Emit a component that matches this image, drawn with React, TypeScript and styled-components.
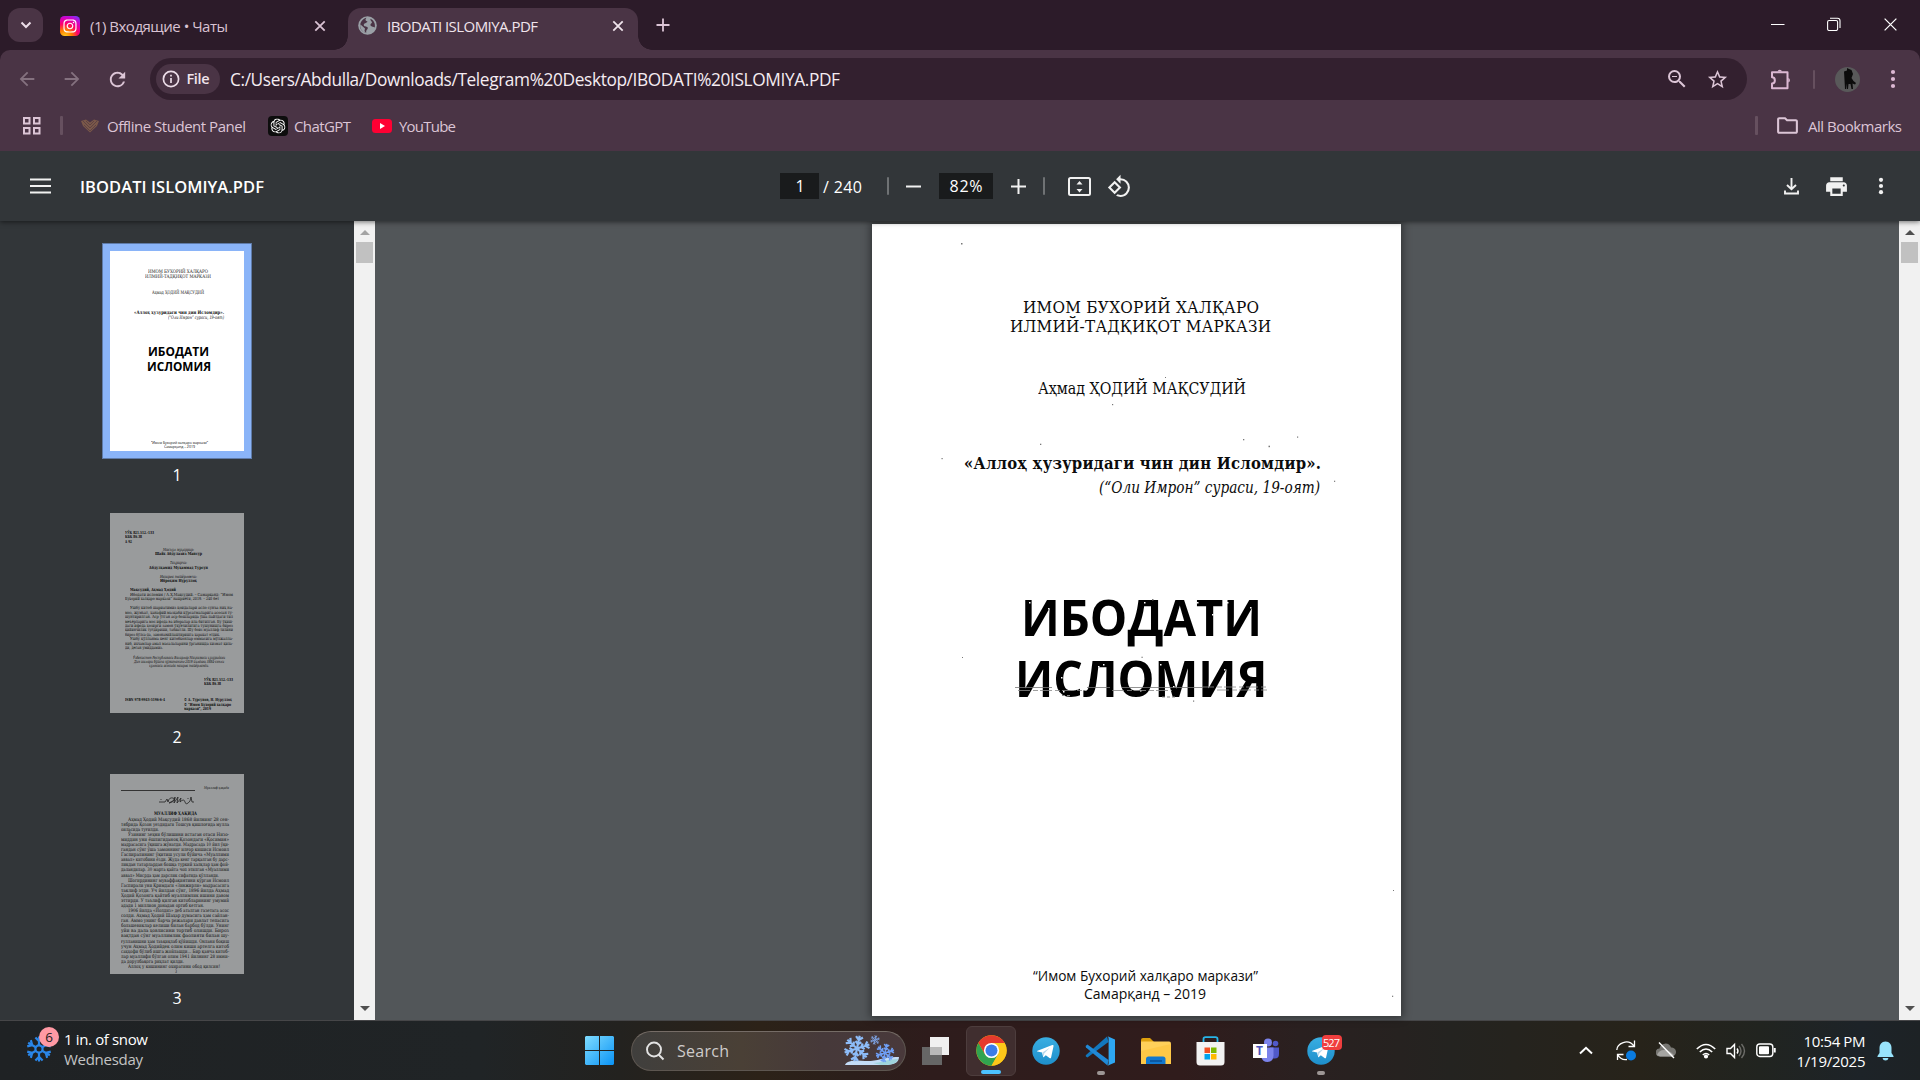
import React, { useLayoutEffect, useRef, useState } from "react";
import styled, { createGlobalStyle, css } from "styled-components";
import { FaInstagram } from "react-icons/fa";
import { SiOpenai } from "react-icons/si";
import {
  MdArrowBack,
  MdArrowForward,
  MdRefresh,
  MdZoomOut,
  MdStarBorder,
  MdPrint,
  MdRotate90DegreesCcw,
  MdOutlineFolder,
} from "react-icons/md";

const UI = '"Open Sans", "Noto Sans", "Liberation Sans", sans-serif';
const SERIF = '"DejaVu Serif Condensed", "DejaVu Serif", "Liberation Serif", serif';

const Global = createGlobalStyle`
  * { box-sizing: border-box; }
  body { margin: 0; background: #202124; overflow: hidden; }
  svg { display: block; flex: none; }
`;

/* ---------- text tracked or condensed to a measure ---------- */

const Measure = styled.span<{
  $w: number; $size: number; $color: string; $weight: number; $font: string;
  $italic?: boolean; $lh?: number; $ml?: number; $mt?: number;
}>`
  display: block;
  flex: none;
  white-space: pre;
  width: ${(p) => p.$w}px;
  height: ${(p) => p.$lh ?? 20}px;
  margin-left: ${(p) => p.$ml ?? 0}px;
  margin-top: ${(p) => p.$mt ?? 0}px;
  font: ${(p) => (p.$italic ? "italic" : "normal")} ${(p) => p.$weight} ${(p) => p.$size}px/${(p) => p.$lh ?? 20}px ${(p) => p.$font};
  color: ${(p) => p.$color};
`;

const Run = styled.span`
  display: inline-block;
  transform-origin: 0 50%;
`;

type TextProps = {
  w: number; size?: number; color?: string; weight?: number; font?: string;
  italic?: boolean; lh?: number; ml?: number; mt?: number; condense?: boolean; children: string;
};

function Text({ w, size = 15, color = "#fff", weight = 400, font = UI, italic, lh, ml, mt, condense, children }: TextProps) {
  const ref = useRef<HTMLSpanElement>(null);
  const [natural, setNatural] = useState(0);
  useLayoutEffect(() => {
    if (ref.current && !natural) setNatural(ref.current.getBoundingClientRect().width);
  }, [natural]);
  const fit = !natural ? undefined
    : condense ? { transform: `scaleX(${w / natural})` }
    : { letterSpacing: `${(w - natural) / Math.max(1, children.length - 1)}px` };
  return (
    <Measure $w={w} $size={size} $color={color} $weight={weight} $font={font} $italic={italic} $lh={lh} $ml={ml} $mt={mt}>
      <Run ref={ref} style={fit}>{children}</Run>
    </Measure>
  );
}

/* ---------- window shell ---------- */

const Screen = styled.div`
  width: 1920px;
  height: 1080px;
  display: flex;
  flex-direction: column;
  overflow: hidden;
  font-family: ${UI};
  background: #2c1b29;
`;

const TabStrip = styled.div`
  height: 50px;
  flex: none;
  display: flex;
  align-items: flex-start;
  padding-left: 8px;
  background: #2c1b29;
`;

const TabSearch = styled.div`
  width: 35px;
  height: 34px;
  margin-top: 8px;
  border-radius: 12px;
  background: #4a3445;
  display: grid;
  place-items: center;
`;

const Tab = styled.div<{ $active?: boolean }>`
  position: relative;
  height: 42.5px;
  margin-top: 7.5px;
  display: flex;
  align-items: center;
  width: ${(p) => (p.$active ? 290 : 305)}px;
  padding: ${(p) => (p.$active ? "0 14px 6px 10px" : "0 22px 6px 17px")};
  border-radius: 13px 13px 0 0;
  background: ${(p) => (p.$active ? "#4a3445" : "transparent")};
  ${(p) => p.$active && css`
    &::before, &::after {
      content: "";
      position: absolute;
      bottom: 0;
      width: 14px;
      height: 14px;
    }
    &::before { left: -14px; background: radial-gradient(circle at 0 0, transparent 13.5px, #4a3445 14px); }
    &::after { right: -14px; background: radial-gradient(circle at 100% 0, transparent 13.5px, #4a3445 14px); }
  `}
`;

const TabClose = styled.div`
  margin-left: auto;
`;

const NewTab = styled.div`
  margin: 18px 0 0 18px;
`;

const WindowControls = styled.div`
  margin: 17px 22px 0 auto;
  display: flex;
  gap: 42px;
`;

const Chrome = styled.div`
  height: 101px;
  flex: none;
  display: flex;
  flex-direction: column;
  background: #4a3445;
  border-radius: 10px 10px 0 0;
`;

const AddressRow = styled.div`
  height: 58px;
  flex: none;
  display: flex;
  align-items: center;
  padding-left: 16px;
`;

const NavButton = styled.div<{ $dim?: boolean }>`
  width: 45px;
  color: ${(p) => (p.$dim ? "#84717f" : "#dcc5d6")};
`;

const Omnibox = styled.div`
  width: 1597px;
  height: 42px;
  margin-left: -1px;
  border-radius: 21px;
  background: #33202f;
  display: flex;
  align-items: center;
  padding: 0 18px 0 6px;
  color: #dcc5d6;
`;

const FileChip = styled.div`
  width: 64px;
  height: 30px;
  border-radius: 15px;
  background: #4a3445;
  display: flex;
  align-items: center;
  padding-left: 6px;
`;

const OmniActions = styled.div`
  margin-left: auto;
  display: flex;
  align-items: center;
  gap: 17px;
`;

const Extras = styled.div`
  display: flex;
  align-items: center;
  flex: 1;
  color: #dcb8d3;
  padding-left: 23px;
`;

const Divider = styled.div<{ $w?: number; $h?: number; $c?: string; $m?: string }>`
  width: ${(p) => p.$w ?? 2}px;
  height: ${(p) => p.$h ?? 19}px;
  margin: ${(p) => p.$m ?? "0"};
  border-radius: 1px;
  flex: none;
  background: ${(p) => p.$c ?? "#66505f"};
`;

const BookmarkRow = styled.div`
  height: 35px;
  display: flex;
  align-items: center;
  padding: 0 18px 0 22px;
`;

const BookmarkIcon = styled.div<{ $w: number; $ml: number }>`
  width: ${(p) => p.$w}px;
  margin-left: ${(p) => p.$ml}px;
  flex: none;
`;

const AllBookmarks = styled.div`
  margin-left: auto;
  display: flex;
  align-items: center;
  color: #dcc5d6;
`;

/* ---------- PDF viewer ---------- */

const PdfToolbar = styled.div`
  position: relative;
  z-index: 2;
  height: 70px;
  flex: none;
  display: grid;
  grid-template-columns: 780px 1fr auto;
  align-items: center;
  background: #323639;
  box-shadow: 0 1px 5px rgba(0, 0, 0, 0.55);
  clip-path: inset(0 0 -10px 0);
`;

const ToolbarGroup = styled.div<{ $pad?: string }>`
  display: flex;
  align-items: center;
  padding: ${(p) => p.$pad ?? "0"};
`;

const Field = styled.div<{ $w: number; $ml?: number }>`
  width: ${(p) => p.$w}px;
  height: 26px;
  margin-left: ${(p) => p.$ml ?? 0}px;
  background: #191b1c;
  display: flex;
  align-items: center;
  justify-content: center;
`;

const ToolIcon = styled.div<{ $ml: number }>`
  margin-left: ${(p) => p.$ml}px;
  color: #f1f1f1;
`;

const Viewer = styled.div`
  height: 799px;
  flex: none;
  display: flex;
  background: #525659;
`;

const Sidebar = styled.div`
  width: 354px;
  background: #323639;
  padding-top: 30px;
  display: flex;
  flex-direction: column;
  align-items: center;
  overflow: hidden;
`;

const Thumb = styled.div`
  height: 261.5px;
  flex: none;
  display: flex;
  flex-direction: column;
  align-items: center;
`;

const ThumbPaper = styled.div<{ $dim?: boolean; $selected?: boolean }>`
  width: 134px;
  height: 200px;
  overflow: hidden;
  flex: none;
  display: flex;
  flex-direction: column;
  background: ${(p) => (p.$dim ? "#999b9c" : "#fff")};
  box-shadow: ${(p) => (p.$selected ? "0 0 0 7px #8ab4f8, 0 0 0 8px #5f7ba8" : "none")};
`;

const ThumbNumber = styled.div`
  font: 400 16px/24px ${UI};
  color: #fff;
  margin-top: 12px;
`;

const ScrollTrack = styled.div`
  width: 21px;
  height: 799px;
  flex: none;
  background: #f1f1f1;
  display: flex;
  flex-direction: column;
  align-items: center;
`;

const Arrow = styled.div<{ $up?: boolean; $c: string }>`
  width: 0;
  height: 0;
  border-left: 5px solid transparent;
  border-right: 5px solid transparent;
  ${(p) => p.$up
    ? css`border-bottom: 5px solid ${p.$c}; margin-top: 9px;`
    : css`border-top: 5px solid ${p.$c}; margin: auto 0 9px;`}
`;

const ScrollThumb = styled.div`
  width: 17px;
  height: 21px;
  margin-top: 7px;
  background: #c1c1c1;
`;

const PageArea = styled.div`
  flex: 1;
  padding: 3px 0 0 497px;
`;

const Paper = styled.div`
  position: relative;
  width: 529px;
  height: 792px;
  background: #fff;
  box-shadow: 0 0 8px 2px rgba(0, 0, 0, 0.4);
  display: flex;
  flex-direction: column;
`;

const Specks = styled.svg`
  position: absolute;
  inset: 0;
`;

/* ---------- taskbar ---------- */

const Taskbar = styled.div`
  height: 60px;
  flex: none;
  display: grid;
  grid-template-columns: 585px 1fr auto;
  border-top: 1px solid #464648;
  background: linear-gradient(90deg, #1f2224 0, #202426 480px, #23221f 620px, #2c2218 760px, #2b1f1b 850px, #2e1c1c 930px, #301c1c 1180px, #2a2020 1300px, #242320 1450px, #27231a 1640px, #212420 1760px, #1d2328 1860px, #1d2225 100%);
`;

const Weather = styled.div`
  display: flex;
  padding: 3px 0 0 26px;
`;

const WeatherIcon = styled.div`
  position: relative;
  width: 38px;
  padding-top: 12px;
`;

const CountBadge = styled.div`
  position: absolute;
  left: 13px;
  top: 3px;
  width: 20px;
  height: 20px;
  border-radius: 50%;
  background: #ff99a4;
  color: #1b1b1b;
  font: 400 13.5px/20px ${UI};
  text-align: center;
`;

const TextStack = styled.div<{ $left?: boolean }>`
  display: flex;
  flex-direction: column;
  align-items: ${(p) => (p.$left ? "flex-start" : "flex-end")};
  padding-top: ${(p) => (p.$left ? 5 : 0)}px;
`;

const Apps = styled.div`
  display: flex;
  align-items: center;
`;

const SearchBox = styled.div`
  width: 275px;
  height: 40px;
  margin: 0 0 0 17px;
  border-radius: 20px;
  border: 1px solid #5d5650;
  border-top-color: #756c66;
  background: linear-gradient(90deg, #403f3d, #4a4036 40%, #46393a 70%, #49393b);
  display: flex;
  align-items: center;
  padding: 0 5px 0 13px;
`;

const AppTile = styled.div<{ $active?: boolean; $ml?: number }>`
  position: relative;
  width: 50px;
  height: 50px;
  margin-left: ${(p) => p.$ml ?? 5}px;
  border-radius: 6px;
  display: grid;
  place-items: center;
  ${(p) => p.$active && css`background: #402e2f; border: 1px solid #4d3d3d;`}
`;

const Running = styled.i<{ $w: number; $c: string }>`
  position: absolute;
  bottom: 1px;
  left: calc(50% - ${(p) => p.$w / 2}px);
  width: ${(p) => p.$w}px;
  height: 4px;
  border-radius: 2px;
  background: ${(p) => p.$c};
`;

const Unread = styled.div`
  position: absolute;
  left: 26px;
  top: 9px;
  width: 20px;
  height: 15px;
  border-radius: 4px;
  background: #f03e3e;
  display: flex;
  justify-content: center;
`;

const Tray = styled.div`
  display: flex;
  align-items: center;
  padding-right: 26px;
`;

const TrayIcon = styled.div<{ $ml?: number }>`
  margin-left: ${(p) => p.$ml ?? 0}px;
`;

/* ---------- icons ---------- */

const CloseX = ({ c, s = 12, w = 1.8 }: { c: string; s?: number; w?: number }) => (
  <svg width={s} height={s} viewBox="0 0 12 12" stroke={c} strokeWidth={w} fill="none"><path d="M1.3 1.3l9.4 9.4M10.7 1.3L1.3 10.7" /></svg>
);

const Dots = ({ c, pitch }: { c: string; pitch: number }) => (
  <svg width="6" height="24" fill={c}>
    <circle cx="3" cy={12 - pitch} r="2.1" /><circle cx="3" cy="12" r="2.1" /><circle cx="3" cy={12 + pitch} r="2.1" />
  </svg>
);

const Globe = () => (
  <svg width="19" height="19" viewBox="0 0 19 19">
    <circle cx="9.5" cy="9.500" r="9.300" fill="#9aa0a6" />
    <path d="M8.500 1.800C6.500 3.800 8 5.200 9.500 5.500C8.500 7.500 5.500 7 5.800 9.200C6 11 9.800 9.800 9.800 12C9.800 13.500 7.800 13.800 8.300 16.800C4.500 16.200 2.300 13.500 2 10C2.500 5.500 5 2.500 8.500 1.800Z" fill="#4a3445" />
    <path d="M2.200 8.300L7 12.500L6.500 15L7.800 16.900A7.500 7.500 0 0 1 2.200 8.300Z" fill="#9aa0a6" />
    <path d="M12.500 2.800C16 4.500 17.500 8 16.800 11.500C15.800 10.500 13.500 11 12.500 9.500C12 8 13.500 7.500 14 6.500C13.800 5 12 5 12.500 2.800Z" fill="#4a3445" />
  </svg>
);

const Puzzle = () => (
  <svg width="22" height="21" fill="none" stroke="currentColor" strokeWidth="2" strokeLinejoin="round">
    <path d="M2 3.200H17.500V19.200H2V14.500C5.800 14.500 5.800 8.300 2 8.300Z" />
    <path d="M7.500 2.500A2.300 2.300 0 0 1 12 2.500ZM18.300 9A2.300 2.300 0 0 1 18.300 13.400Z" fill="currentColor" stroke="none" />
  </svg>
);

const Flake = ({ size, color, w = 2.2 }: { size: number; color: string; w?: number }) => (
  <svg width={size} height={size} viewBox="-13 -13 26 26" stroke={color} strokeWidth={w} fill="none">
    <circle r="3.6" />
    {[0, 60, 120, 180, 240, 300].map((a) => (
      <path key={a} transform={`rotate(${a})`} d="M0-3.6V-12.5M-3.6-11.5L0-7.8L3.6-11.5" />
    ))}
  </svg>
);

const SnowArt = () => (
  <svg width="57" height="31" viewBox="0 0 57 31" fill="none">
    <path d="M2 30C4 25 14 25 22 26C33 27 42 21 56 22C56 28 50 30 42 30Z" fill="#c4dcf7" />
    <path d="M30 28C38 28 44 24 55 24C54 29 48 30 38 30Z" fill="#9fd4dd" />
    {[[14, 13.5, 1, "#8dbcf8"], [42, 18, 0.72, "#6f9ff5"], [32, 5, 0.36, "#7fa6e8"]].map(([x, y, s, c], i) => (
      <g key={i} transform={`translate(${x} ${y}) scale(${s}) rotate(12)`} stroke={c as string} strokeWidth="2.2">
        {[0, 60, 120, 180, 240, 300].map((a) => (
          <path key={a} transform={`rotate(${a})`} d="M0 0V-13M-3.5-12L0-8.6L3.5-12M-3-7L0-4.5L3-7" />
        ))}
      </g>
    ))}
  </svg>
);

const Telegram = () => (
  <svg width="28" height="28" viewBox="0 0 28 28">
    <defs><linearGradient id="tg" x2="0" y2="1"><stop stopColor="#39aee2" /><stop offset="1" stopColor="#1e8fcb" /></linearGradient></defs>
    <circle cx="14" cy="14" r="13.7" fill="url(#tg)" />
    <path d="M5.5 13.7L20.3 8c.8-.3 1.4.2 1.2 1.2l-2.4 11.2c-.2.9-.9 1.1-1.6.7l-3.7-2.8-1.9 1.8c-.3.3-.6.3-.7-.2l-1.2-4.3-4.4-1c-.8-.2-.8-.7-.1-.9z" fill="#fff" />
    <path d="M10.4 15.4l7.6-4.9-5.8 6-.5 3.3z" fill="#b9d9ec" />
  </svg>
);

const ChromeLogo = () => (
  <svg width="31" height="31" viewBox="-24 -24 48 48">
    <circle r="23.5" fill="#fbbc05" />
    <path d="M-20.35-11.75A23.5 23.5 0 0 1 20.35-11.75H0L-10.2 5.9Z" fill="#e53a2d" />
    <path d="M-20.35-11.75A23.5 23.5 0 0 0 0 23.5L10.2 5.9L0 11L-10.2 5.9Z" fill="#31a350" />
    <path d="M20.35-11.75A23.5 23.5 0 0 1 0 23.5L10.2 5.9L0-11.75Z" fill="#fdc81a" />
    <circle r="11.8" fill="#fff" /><circle r="9.3" fill="#3b7de8" />
  </svg>
);

const VsCode = () => (
  <svg width="31" height="30" viewBox="0 0 31 30">
    <path d="M22 .5L1 19Q.2 20 1.2 20.8L2.4 21.6L23.5 6Z" fill="#1277bd" />
    <path d="M22.5 29.5L1 11.5Q.2 10.5 1.2 9.5L2.4 8.6L23.5 24Z" fill="#2089d6" />
    <path d="M22.5.3L30 3.5V26.5L22.5 29.7Q23.6 29 23.6 27.5V2.5Q23.6 1 22.5.3Z" fill="#2ea7f2" />
  </svg>
);

const Explorer = () => (
  <svg width="30" height="28" viewBox="0 0 30 28">
    <path d="M0 3Q0 1 2 1H9L13 5H0Z" fill="#dfa00d" />
    <path d="M0 4.5H28Q30 4.5 30 6.5V27H0Z" fill="#ffd05a" />
    <path d="M0 14L30 7V27H0Z" fill="#fdc53e" opacity=".7" />
    <path d="M5 27V22Q5 19.5 7.500 19.500H22Q24.500 19.500 24.500 22V27Z" fill="#1278cf" />
    <path d="M9 24H21" stroke="#0a4f96" strokeWidth="1.500" />
  </svg>
);

const Store = () => (
  <svg width="29" height="30" viewBox="0 0 29 30">
    <path d="M7.500 7V3Q7.500 1.200 9.500 1.200H19.500Q21.500 1.200 21.500 3V7" stroke="#27b5e9" strokeWidth="1.800" fill="none" />
    <path d="M.5 6H28.5V26Q28.500 29.500 25 29.500H4Q.5 29.500 .5 26Z" fill="#f2f2f2" />
    <path d="M8.500 11.500H14V17H8.500Z" fill="#f25022" /><path d="M15 11.500H20.500V17H15Z" fill="#7fba00" />
    <path d="M8.500 18H14V23.500H8.500Z" fill="#00a4ef" /><path d="M15 18H20.500V23.500H15Z" fill="#ffb900" />
  </svg>
);

const TeamsMark = styled.div`
  position: relative;
  width: 28px;
  height: 25px;
  & > span {
    position: absolute;
    left: 1px;
    top: 6px;
    width: 14px;
    height: 14px;
    background: #fff;
    color: #4b53bc;
    font: 700 12px/14px ${UI};
    text-align: center;
  }
`;

const Teams = () => (
  <TeamsMark>
    <svg width="28" height="25" viewBox="0 0 28 25">
      <circle cx="23.500" cy="5.500" r="2.800" fill="#5059c9" /><circle cx="16" cy="4.500" r="4" fill="#7b83eb" />
      <path d="M18 9.500H27V16Q27 20.500 22.500 20.500H18Z" fill="#5059c9" />
      <path d="M9 9.500H21.500V17.500Q21 24 15.500 24Q10.500 24 9 18.500Z" fill="#7b83eb" />
    </svg>
    <span>T</span>
  </TeamsMark>
);

/* ---------- document content ---------- */

type Line = [y: number, x: number, w: number, text: string, style?: "b" | "i"];

const Leaf = styled.div`
  display: flex;
  flex-direction: column;
`;

function Lines({ lines, size, start = 0 }: { lines: Line[]; size: number; start?: number }) {
  return (
    <Leaf>
      {lines.map(([y, x, w, text, style], i) => (
        <Text key={i} w={w} ml={x} lh={4} mt={y - 2 - (i ? lines[i - 1][0] + 2 : start)}
          size={size} color="#0c0c0c" font={SERIF} condense
          weight={style === "b" ? 700 : 400} italic={style === "i"}>{text}</Text>
      ))}
    </Leaf>
  );
}

const ImprintFoot = styled.div`
  display: grid;
  grid-template-columns: 59px auto;
  padding-left: 15px;
  margin-top: 12.5px;
`;

const Imprint: Line[] = [
  [20, 15, 29, "УЎК 821.512.-133", "b"], [24.7, 15, 17, "КБК 86.38", "b"], [29.3, 15, 7, "А 92", "b"],
  [37.5, 53, 31, "Масъул муҳаррир:", "i"], [42, 45, 47, "Шайх Абдулазиз Мансур", "b"],
  [50.7, 60, 17, "Таҳрирчи:", "i"], [55.3, 39, 59, "Абдулҳамид Муҳаммад Турсун", "b"],
  [64.5, 50, 37, "Нашрга тайёрловчи:", "i"], [69, 50, 37, "Иброҳим Нуруллоҳ", "b"],
  [77.7, 20, 46, "Мақсудий, Аҳмад Ҳодий", "b"],
  [82.3, 20, 103, "Ибодати исломия / А.Ҳ.Мақсудий. – Самарқанд: “Имом"],
  [86.7, 15, 94, "Бухорий халқаро маркази” нашриёти, 2019. – 240 бет"],
  [95.7, 20, 103, "Ушбу китоб шариатимиз қоидалари асло сунъа ниҳ на-"],
  [100.2, 15, 108, "моз, жумъат, ҳанафий мазҳаби кўрсатмаларига асосан ту-"],
  [104.7, 15, 108, "шунтирилган. Аср ўтган аср бошларида ўша пайтдаги тил"],
  [109.1, 15, 108, "меъёрларига мос ифода ва иборалар ила битилган. Бу ўқиш-"],
  [113.600, 15, 108, "даги ифода ҳозирги замон ўқувчилигига тушунишга бироз"],
  [118, 15, 108, "қийинчилик туғдириши, табиатли. Шу боис муаллиф тилини"],
  [122.500, 15, 95, "бироз бўлса-да, замонавийлаштиришга ҳаракат этдик."],
  [127, 20, 103, "Ушбу қўлланма кенг китобхонлар оммасига мўлжалла-"],
  [131.500, 15, 108, "ниб, ихчамлар амал масалаларини ўрганишда хизмат қила-"],
  [136, 15, 38, "ди, деган умиддамиз."],
  [145.700, 23, 92, "Ўзбекистон Республикаси Вазирлар Маҳкамаси ҳузуридаги", "i"],
  [149.900, 24, 90, "Дин ишлари бўйича қўмитанинг 2019 йилдаги 3884-сонли", "i"],
  [154, 39, 60, "хулосаси асосида нашрга тайёрланди.", "i"],
  [167.300, 94, 29, "УЎК 821.512.-133", "b"], [171.500, 94, 17, "КБК 86.38", "b"],
];

const Rights: Line[] = [
  [2, 0, 48, "© А. Турсунов, Н. Нуруллоҳ", "b"],
  [6.300, 0, 47, "© “Имом Бухорий халқаро", "b"],
  [10.600, 0, 27, "маркази”, 2019", "b"],
];

const bio = [
  " Аҳмад Ҳодий Мақсудий 1868 йилнинг 28 сен-", "тябрида Қозон уездидаги Тошсув қишлоғида мулла", "оиласида туғилди.|38",
  " Ўзининг зеҳни бўлишини истаган отаси Низо-", "миддин уни ёшлигиданоқ Қозондаги «Қосимия»", "мадрасасига ўқишга жўнатди. Мадрасада 10 йил ўқи-",
  "гандан сўнг ўша замоннинг илғор кишиси Исмоил", "Гаспиралининг ўқитиш усули бўйича «Муаллими", "аввал» китобини ёзди. Жуда кенг тарқалган бу дарс-",
  "ликдан татарлардан бошқа туркий халқлар ҳам фой-", "даландилар. 30 марта қайта чоп этилган «Муаллими", "аввал» Мисрда ҳам дарслик сифатида қўлланди.|98",
  " Шогирдининг муваффақиятини кўрган Исмоил", "Гаспирали уни Қримдаги «Зинжирли» мадрасасига", "таклиф этди. Уч йилдан сўнг, 1896 йилда Аҳмад", "Ҳодий Қозонга қайтиб муаллимлик ишини давом",
  "эттирди. У таълиф қилган китобларининг умумий", "адади 1 миллион донадан ортиб кетган.|83",
  " 1906 йилда «Йолдиз» деб аталган газетага асос", "солди. Аҳмад Ҳодий Шаҳар думасига ҳам сайлан-", "ган. Аммо унинг барча режалари давлат тепасига", "большевиклар келиши билан барбод бўлди. Унинг",
  "уйи ва дала ҳовлисини тортиб олишди. Бироз", "вақтдан сўнг муаллимлик фаолияти билан шу-", "ғулланишни ҳам таъқиқлаб қўйишди. Онлани боқиш", "учун Аҳмад Ҳодийдек олим киши артелга китоб",
  "саҳҳофи бўлиб ишга жойлашди... Бир қанча китоб-", "лар муаллифи бўлган олим 1941 йилнинг 28 июни-", "да дорулбақога риҳлат қилди.|63", " Аллоҳ у кишининг охиратини обод қилсин!|92",
];

const Bio: Line[] = [
  [39, 44, 43, "МУАЛЛИФ ҲАҚИДА", "b"],
  ...bio.map((s, i): Line => {
    const [t, w] = s.split("|");
    const indent = t.startsWith(" ") ? 7 : 0;
    return [45.7 + i * 5.09, 11 + indent, w ? +w : 108 - indent, t.trim()];
  }),
  [198.300, 65, 2, "3"],
];

const BioHead = styled.div`
  height: 36px;
  flex: none;
  display: grid;
  grid-template-columns: 85px auto;
  padding: 11px 0 0 11px;
  & > hr { width: 74px; height: 1px; border: 0; margin: 5px 0 0; background: #333; }
  & > svg { grid-column: 1 / 3; margin-left: 38px; }
`;

const Cover: Line[] = [
  [21.300, 38, 60, "ИМОМ БУХОРИЙ ХАЛҚАРО"], [26.300, 35, 66, "ИЛМИЙ-ТАДҚИҚОТ МАРКАЗИ"],
  [42, 42, 52, "Аҳмад ҲОДИЙ МАҚСУДИЙ"],
  [61.300, 24, 90, "«Аллоҳ ҳузуридаги чин дин Исломдир».", "b"],
  [67.300, 58, 56, "(“Оли Имрон” сураси, 19-оят)", "i"],
];

const SPECKS: [number, number, number][] = [
  [89, 19, 1.5], [293, 153, 1], [240, 180, 1.2], [168, 219.700, 1.300], [371, 215, 1.300], [425, 212.500, 1.200],
  [396.500, 221.700, 1.500], [69.500, 234, 1.200], [462, 256.700, 1.200], [90, 433, 1], [269.500, 432.700, 1.200],
  [520, 771.700, 1.200], [521, 666, 1], [280, 375, 1.500], [321, 476.500, 1.200],
];

const WHITE: [number, number][] = [
  [157, 378], [176, 384], [272, 378], [325, 378], [340, 390], [355, 378], [378, 383],
  [189, 453], [205, 464], [231, 440], [230, 455], [288, 440], [301, 462], [324, 464], [352, 445], [361, 460], [379, 462], [382, 466],
  [191, 467], [226, 442], [303, 459], [296, 465], [268, 466],
];

function Scrollbar({ dim }: { dim?: boolean }) {
  return (
    <ScrollTrack>
      <Arrow $up $c={dim ? "#a3a3a3" : "#505050"} />
      <ScrollThumb />
      <Arrow $c="#505050" />
    </ScrollTrack>
  );
}

export default function App() {
  return (
    <>
      <Global />
      <Screen>
        <TabStrip>
          <TabSearch>
            <svg width="12" height="8" fill="none" stroke="#ecdde8" strokeWidth="2"><path d="M1.500 1.500L6 6L10.500 1.500" /></svg>
          </TabSearch>
          <Tab>
            <svg width="20" height="20" viewBox="0 0 20 20">
              <defs>
                <radialGradient id="ig" cx=".25" cy="1.050" r="1.200"><stop stopColor="#ffd521" /><stop offset=".3" stopColor="#ff7a00" /><stop offset=".55" stopColor="#ff0069" /><stop offset=".8" stopColor="#d300c5" /><stop offset="1" stopColor="#7638fa" /></radialGradient>
              </defs>
              <rect width="20" height="20" rx="4.500" fill="url(#ig)" />
              <FaInstagram x={2.500} y={2.500} size={15} color="#fff" />
            </svg>
            <Text w={138} ml={10} color="#d9c2d3">(1) Входящие • Чаты</Text>
            <TabClose><CloseX c="#d9c2d3" /></TabClose>
          </Tab>
          <Tab $active>
            <Globe />
            <Text w={151} ml={10} color="#f0e4ec">IBODATI ISLOMIYA.PDF</Text>
            <TabClose><CloseX c="#f0e4ec" /></TabClose>
          </Tab>
          <NewTab>
            <svg width="14" height="14" stroke="#dcc5d6" strokeWidth="1.800"><path d="M7 .5V13.500M.5 7H13.500" /></svg>
          </NewTab>
          <WindowControls>
            <svg width="14" height="14" stroke="#fff"><path d="M0 7.500H13.500" /></svg>
            <svg width="14" height="14" fill="none" stroke="#fff" strokeWidth="1.100"><rect x=".6" y="3.500" width="10" height="10" rx="1.500" /><path d="M3 1.200H10.500Q13 1.200 13 3.700V11" /></svg>
            <CloseX c="#fff" s={15} w={1} />
          </WindowControls>
        </TabStrip>

        <Chrome>
          <AddressRow>
            <NavButton $dim><MdArrowBack size={22} /></NavButton>
            <NavButton $dim><MdArrowForward size={22} /></NavButton>
            <NavButton><MdRefresh size={23} /></NavButton>
            <Omnibox>
              <FileChip>
                <svg width="18" height="18" fill="none" stroke="#ecdde8" strokeWidth="1.700"><circle cx="9" cy="9" r="7.600" /><path d="M9 8V13M9 4.800V6.500" /></svg>
                <Text w={23} ml={6.500} weight={600} size={14.500} color="#f0e4ec">File</Text>
              </FileChip>
              <Text w={610} ml={10} size={17.300} lh={22} mt={1} color="#f5ecf2">C:/Users/Abdulla/Downloads/Telegram%20Desktop/IBODATI%20ISLOMIYA.PDF</Text>
              <OmniActions>
                <MdZoomOut size={24} />
                <MdStarBorder size={23} />
              </OmniActions>
            </Omnibox>
            <Extras>
              <Puzzle />
              <Divider $m="0 20px 0 21px" />
              <svg width="25" height="25">
                <circle cx="12.500" cy="12.500" r="12.500" fill="#59595a" />
                <path d="M12 1L14 2L16.500 3L18 7L16.500 11L18.500 14L21 16L20 17.500L17.500 16.500L18 22H16.500L15.500 17H13.500L13 22H11.800L11.500 16.500L11 22H10L9.500 13L9 4.500L12 3.500Z" fill="#0b0b0b" />
              </svg>
              <BookmarkIcon $w={6} $ml={29.500}><Dots c="#dcb8d3" pitch={7} /></BookmarkIcon>
            </Extras>
          </AddressRow>
          <BookmarkRow>
            <svg width="20" height="20" fill="none" stroke="#dcc5d6" strokeWidth="2"><rect x="2" y="2" width="5.500" height="5.500" /><rect x="12" y="2" width="5.500" height="5.500" /><rect x="2" y="12" width="5.500" height="5.500" /><rect x="12" y="12" width="5.500" height="5.500" /></svg>
            <Divider $w={3} $m="0 0 0 18px" />
            <BookmarkIcon $w={18} $ml={18}>
              <svg width="18" height="14"><path d="M0 2L5 .5L9 3.500L13 .5L18 2L16 7L9 13.500L2 7Z" fill="#7a5849" /><path d="M2 2L9 9L16 2M3 6L9 12L15 6M5 2L9 6L13 2" fill="none" stroke="#553c43" strokeWidth=".8" /></svg>
            </BookmarkIcon>
            <Text w={139} ml={8} color="#dcc5d6">Offline Student Panel</Text>
            <BookmarkIcon $w={20} $ml={21.500}>
              <svg width="20" height="20"><rect width="20" height="20" rx="4" fill="#0d0d0d" /><SiOpenai x={2.500} y={2.500} size={15} color="#fff" /></svg>
            </BookmarkIcon>
            <Text w={57} ml={6.500} color="#dcc5d6">ChatGPT</Text>
            <BookmarkIcon $w={20} $ml={21}>
              <svg width="20" height="14"><rect width="20" height="14" rx="3.500" fill="#ff0033" /><path d="M8 4L13 7L8 10Z" fill="#fff" /></svg>
            </BookmarkIcon>
            <Text w={57} ml={7} color="#dcc5d6">YouTube</Text>
            <AllBookmarks>
              <Divider $w={3} $m="0 17px 0 0" />
              <MdOutlineFolder size={25} />
              <Text w={94} ml={8} color="#dcc5d6">All Bookmarks</Text>
            </AllBookmarks>
          </BookmarkRow>
        </Chrome>

        <PdfToolbar>
          <ToolbarGroup $pad="0 0 0 30px">
            <svg width="21" height="16" stroke="#f1f1f1" strokeWidth="2.200"><path d="M0 1.500H21M0 8H21M0 14.500H21" /></svg>
            <Text w={184} ml={29} mt={1} weight={600} size={16.500} lh={22}>IBODATI ISLOMIYA.PDF</Text>
          </ToolbarGroup>
          <ToolbarGroup>
            <Field $w={39}><Text w={8} size={16}>1</Text></Field>
            <Text w={39} ml={4} size={16} mt={1}>/ 240</Text>
            <Divider $h={18} $c="#6f7274" $m="0 0 0 25px" />
            <ToolIcon $ml={17}><svg width="15" height="16" stroke="currentColor" strokeWidth="2"><path d="M0 8.500H15" /></svg></ToolIcon>
            <Field $w={54} $ml={18}><Text w={33} size={16}>82%</Text></Field>
            <ToolIcon $ml={18}><svg width="15" height="16" stroke="currentColor" strokeWidth="2"><path d="M0 8.500H15M7.500 1V16" /></svg></ToolIcon>
            <Divider $h={18} $c="#6f7274" $m="0 0 0 17px" />
            <ToolIcon $ml={23}>
              <svg width="23" height="19" fill="none" stroke="currentColor" strokeWidth="2"><rect x="1" y="1" width="21" height="17" rx="1.500" /><path d="M8.500 7.500L11.500 4L14.500 7.500ZM8.500 12L11.500 15.500L14.500 12Z" fill="currentColor" stroke="none" /></svg>
            </ToolIcon>
            <ToolIcon $ml={16}><MdRotate90DegreesCcw size={25} /></ToolIcon>
          </ToolbarGroup>
          <ToolbarGroup $pad="0 36px 0 0">
            <ToolIcon $ml={0}><svg width="15" height="18" fill="none" stroke="currentColor" strokeWidth="1.900"><path d="M7.500 1V12M3 8L7.500 12.300L12 8M1 13.500V16.500H14V13.500" /></svg></ToolIcon>
            <ToolIcon $ml={25}><MdPrint size={25} /></ToolIcon>
            <ToolIcon $ml={29.500}><Dots c="#f1f1f1" pitch={6.200} /></ToolIcon>
          </ToolbarGroup>
        </PdfToolbar>

        <Viewer>
          <Sidebar>
            <Thumb>
              <ThumbPaper $selected>
                <Lines lines={Cover} size={4.800} />
                <Text w={61} ml={38} mt={22.500} lh={16} size={13} weight={700} color="#000" condense>ИБОДАТИ</Text>
                <Text w={64} ml={36.500} mt={-0.500} lh={16} size={13} weight={700} color="#000" condense>ИСЛОМИЯ</Text>
                <Text w={57} ml={41} mt={65.500} lh={4.500} size={4.300} color="#000" condense>“Имом Бухорий халқаро маркази”</Text>
                <Text w={31} ml={54} lh={4.500} size={4.300} color="#000" condense>Самарқанд – 2019</Text>
              </ThumbPaper>
              <ThumbNumber>1</ThumbNumber>
            </Thumb>
            <Thumb>
              <ThumbPaper $dim>
                <Lines lines={Imprint} size={4.200} />
                <ImprintFoot>
                  <Text w={40} lh={4} size={4.200} color="#0c0c0c" font={SERIF} weight={700} condense>ISBN 978-9943-5196-6-4</Text>
                  <Lines lines={Rights} size={4.200} />
                </ImprintFoot>
              </ThumbPaper>
              <ThumbNumber>2</ThumbNumber>
            </Thumb>
            <Thumb>
              <ThumbPaper $dim>
                <BioHead>
                  <hr />
                  <Text w={25} lh={5} size={3.800} color="#0c0c0c" font={SERIF} italic ml={-2} condense>Муаллиф ҳақида</Text>
                  <svg width="36" height="9" fill="none" stroke="#222" strokeWidth=".8"><path d="M0 6H6L8 3L9 6Q10 1 14 2T10 7Q16 6 16 1L15 7L19 1L18 7L22 2L21 6Q25 2 26 6T31 5L32 1L33 6H35M2 4V3M29 3V2" /></svg>
                </BioHead>
                <Lines lines={Bio} size={4.800} start={36} />
              </ThumbPaper>
              <ThumbNumber>3</ThumbNumber>
            </Thumb>
          </Sidebar>
          <Scrollbar dim />
          <PageArea>
            <Paper>
              <Text font={SERIF} color="#0c0c0c" size={17} lh={20} w={236} ml={151} mt={72.500}>ИМОМ БУХОРИЙ ХАЛҚАРО</Text>
              <Text font={SERIF} color="#0c0c0c" size={17} lh={20} w={261} ml={138} mt={-0.500}>ИЛМИЙ-ТАДҚИҚОТ МАРКАЗИ</Text>
              <Text font={SERIF} color="#0c0c0c" size={16.500} lh={20} w={208} ml={165.500} mt={42.500} condense>Аҳмад ҲОДИЙ МАҚСУДИЙ</Text>
              <Text font={SERIF} color="#0c0c0c" size={16.500} lh={20} w={357} ml={92} mt={55} weight={700}>«Аллоҳ ҳузуридаги чин дин Исломдир».</Text>
              <Text font={SERIF} color="#0c0c0c" size={16} lh={20} w={221} ml={227} mt={4} italic condense>(“Оли Имрон” сураси, 19-оят)</Text>
              <Text color="#000" size={50.500} lh={60} w={241} ml={149} mt={89.500} weight={700} condense>ИБОДАТИ</Text>
              <Text color="#000" size={50.500} lh={60} w={252.500} ml={142.500} mt={0.500} weight={700} condense>ИСЛОМИЯ</Text>
              <Text color="#0c0c0c" size={15.300} lh={18} w={225} ml={161} mt={258.500} weight={500} condense>“Имом Бухорий халқаро маркази”</Text>
              <Text color="#0c0c0c" size={15.300} lh={18} w={122} ml={212} weight={500} condense>Самарқанд – 2019</Text>
              <Specks width="529" height="792">
                {SPECKS.map(([x, y, s], i) => <rect key={i} x={x} y={y} width={s} height={s} fill="#777" />)}
                {WHITE.map(([x, y], i) => <rect key={i} x={x} y={y} width="1.500" height="1.500" fill="#fff" />)}
                <path d="M143 463.500H180M215 463.500H238M250 463.500H330" stroke="#777" strokeWidth=".8" />
                <path d="M330 463H395M146 466.500H210M240 466.500H300M345 466H395" stroke="#888" strokeWidth=".8" strokeDasharray="12 3 5 2" />
                <path d="M190 471.500H200M290 473H303" stroke="#888" strokeDasharray="3 2" />
              </Specks>
            </Paper>
          </PageArea>
          <Scrollbar />
        </Viewer>

        <Taskbar>
          <Weather>
            <WeatherIcon>
              <Flake size={26} color="#2a86e8" />
              <CountBadge>6</CountBadge>
            </WeatherIcon>
            <TextStack $left>
              <Text w={84}>1 in. of snow</Text>
              <Text w={79} color="#c4c4c4">Wednesday</Text>
            </TextStack>
          </Weather>
          <Apps>
            <svg width="29" height="29">
              <defs><linearGradient id="win" x2="1" y2="1"><stop stopColor="#7fdcff" /><stop offset="1" stopColor="#0a93f5" /></linearGradient></defs>
              <path d="M1 0H14V14H0V1ZM15 0H28L29 1V14H15ZM0 15H14V29H1L0 28ZM15 15H29V28L28 29H15Z" fill="url(#win)" />
            </svg>
            <SearchBox>
              <svg width="20" height="20" fill="none" stroke="#e3e3e3" strokeWidth="1.900"><circle cx="9" cy="8.500" r="7" /><path d="M13.500 13.500L18.500 18.500" /></svg>
              <Text w={52} ml={12} size={16} color="#cfcccb">Search</Text>
              <OmniActions><SnowArt /></OmniActions>
            </SearchBox>
            <AppTile>
              <svg width="28" height="28"><path d="M0 10H20V28H0Z" fill="#666" /><path d="M8 0H27V18H8Z" fill="#f0f0f0" /><path d="M8 10H20V18H8Z" fill="#b9b9b9" /></svg>
            </AppTile>
            <AppTile $active><ChromeLogo /><Running $w={20} $c="#4cc2ff" /></AppTile>
            <AppTile $ml={4.500}><Telegram /></AppTile>
            <AppTile><VsCode /><Running $w={8} $c="#9d9695" /></AppTile>
            <AppTile><Explorer /></AppTile>
            <AppTile><Store /></AppTile>
            <AppTile><Teams /></AppTile>
            <AppTile><Telegram /><Unread><Text w={17} size={11} lh={15}>527</Text></Unread><Running $w={8} $c="#9d9695" /></AppTile>
          </Apps>
          <Tray>
            <TrayIcon><svg width="14" height="9" fill="none" stroke="#fff" strokeWidth="2"><path d="M1 7.500L7 1.800L13 7.500" /></svg></TrayIcon>
            <TrayIcon $ml={23}>
              <svg width="20" height="21" fill="none" stroke="#fff" strokeWidth="1.300"><path d="M.8 10C1 3.500 12 -2 18 6M18.500 .5V6.500H12.500M1.500 20V14.500H7.500M1.500 14.500C4 19 8 20 11 19.500" /><circle cx="15" cy="15.500" r="5" fill="#0a7be0" stroke="none" /></svg>
            </TrayIcon>
            <TrayIcon $ml={20}>
              <svg width="20" height="17"><path d="M4 14.500A4 4 0 0 1 3.500 6.500A6 6 0 0 1 15 5.500A4.500 4.500 0 0 1 16 14.500Z" fill="#777672" /><path d="M1 13Q3 8 8 8T18 13L16 14.500H4Z" fill="#a5a4a1" /><path d="M3 .5L18 16" stroke="#fff" strokeWidth="1.400" /></svg>
            </TrayIcon>
            <TrayIcon $ml={20}>
              <svg width="20" height="16" fill="none" stroke="#fff" strokeWidth="1.600"><path d="M.8 6Q10-3 19.200 6M3.800 9Q10 3 16.200 9M6.800 12Q10 9 13.200 12" /><circle cx="10" cy="13.500" r="1.300" fill="#fff" /></svg>
            </TrayIcon>
            <TrayIcon $ml={10}>
              <svg width="20" height="18" fill="none" stroke="#fff" strokeWidth="1.400"><path d="M1 6.500H4.500L8.500 2.500V15.500L4.500 11.500H1Z" /><path d="M11 6.500Q13 9 11 11.500" /><path d="M13 4Q17 9 13 14M15.500 2Q21.500 9 15.500 16" stroke="#6c6c68" /></svg>
            </TrayIcon>
            <TrayIcon $ml={10}>
              <svg width="20" height="15" fill="none" stroke="#fff" strokeWidth="1.400"><rect x=".8" y="1" width="16" height="12.500" rx="3" /><rect x="3" y="3.300" width="10" height="8" rx="1" fill="#fff" stroke="none" /><path d="M18.700 5V9.500" strokeWidth="2" /></svg>
            </TrayIcon>
            <TrayIcon $ml={21}>
              <TextStack>
                <Text w={62}>10:54 PM</Text>
                <Text w={69}>1/19/2025</Text>
              </TextStack>
            </TrayIcon>
            <TrayIcon $ml={11.500}>
              <svg width="17" height="20" fill="#98e3fb"><path d="M8.500 .5C12.500 .5 14.500 3.500 14.500 7V12L16.500 15V16H.5V15L2.500 12V7C2.500 3.500 4.500 .5 8.500 .5ZM5.500 17H11.500Q11 19.500 8.500 19.500T5.500 17Z" /></svg>
            </TrayIcon>
          </Tray>
        </Taskbar>
      </Screen>
    </>
  );
}
